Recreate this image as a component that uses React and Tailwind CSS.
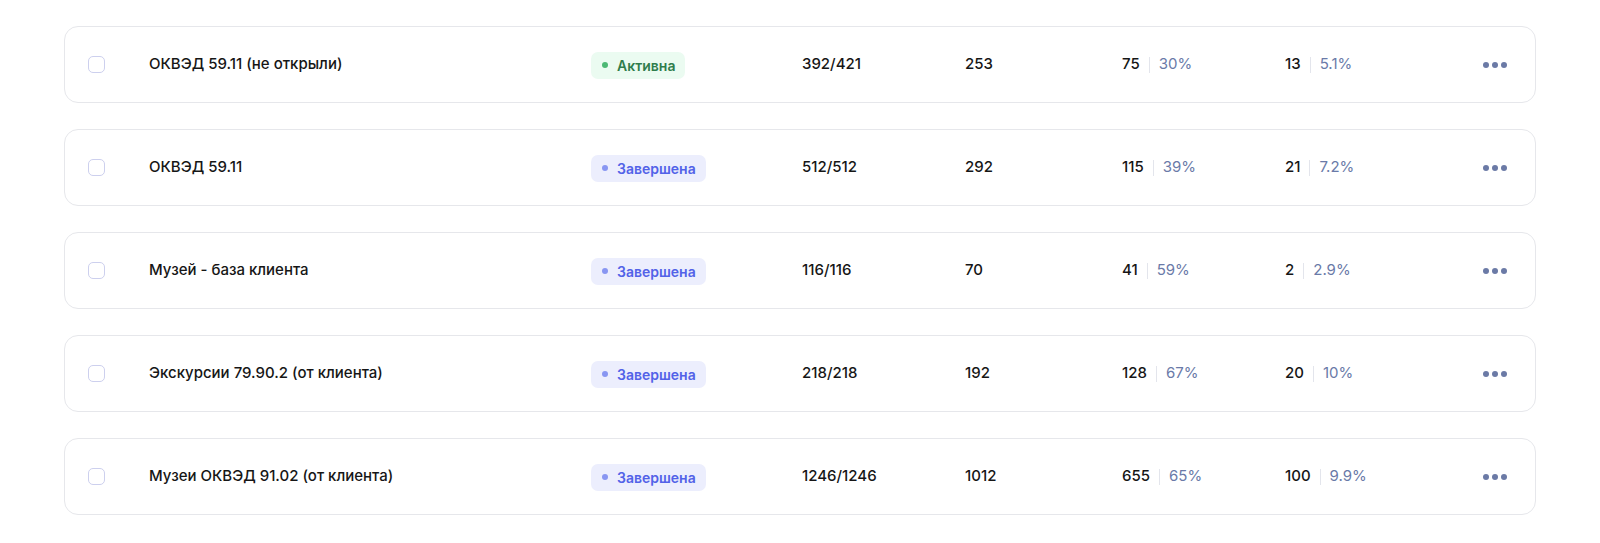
import React from "react";

const rows = [
  { name: "ОКВЭД 59.11 (не открыли)", status: "active", sent: "392/421", opened: "253", a: "75", ap: "30%", b: "13", bp: "5.1%" },
  { name: "ОКВЭД 59.11", status: "done", sent: "512/512", opened: "292", a: "115", ap: "39%", b: "21", bp: "7.2%" },
  { name: "Музей - база клиента", status: "done", sent: "116/116", opened: "70", a: "41", ap: "59%", b: "2", bp: "2.9%" },
  { name: "Экскурсии 79.90.2 (от клиента)", status: "done", sent: "218/218", opened: "192", a: "128", ap: "67%", b: "20", bp: "10%" },
  { name: "Музеи ОКВЭД 91.02 (от клиента)", status: "done", sent: "1246/1246", opened: "1012", a: "655", ap: "65%", b: "100", bp: "9.9%" },
];

function Badge({ status }) {
  if (status === "active") {
    return (
      <span className="inline-flex h-[27px] items-center gap-[9px] rounded-[7px] bg-[#ebfbf1] pl-[11px] pr-[10px] text-[14px] font-semibold text-[#2f7d4c]">
        <span className="h-[6px] w-[6px] rounded-full bg-[#4cb874]" />
        Активна
      </span>
    );
  }
  return (
    <span className="inline-flex h-[27px] items-center gap-[9px] rounded-[7px] bg-[#eceefd] pl-[11px] pr-[10px] text-[14px] font-semibold text-[#5262e8]">
      <span className="h-[6px] w-[6px] rounded-full bg-[#8896f2]" />
      Завершена
    </span>
  );
}

function Pair({ n, p }) {
  return (
    <div className="flex items-center">
      <span className="text-[15px] font-medium text-[#161616]">{n}</span>
      <span className="mx-[9px] h-[16px] w-px bg-[#e3e5ec]" />
      <span className="text-[15px] font-normal text-[#6a7aa8]">{p}</span>
    </div>
  );
}

export default function App() {
  return (
    <div
      className="flex min-h-[543px] w-full flex-col gap-[26px] bg-white px-[64px] pt-[26px]"
      style={{ fontFamily: "Inter, 'Noto Sans', sans-serif" }}
    >
      {rows.map((r, i) => (
        <div
          key={i}
          className="flex h-[77px] items-center rounded-[14px] border border-[#e6e7eb] bg-white pl-[23px] pr-[28px]"
        >
          <div className="w-[61px] shrink-0">
            <div className="h-[17px] w-[17px] rounded-[5px] border-[1.5px] border-[#cdd0ee]" />
          </div>
          <div className="w-[442px] shrink-0 text-[15px] font-medium text-[#161616]">{r.name}</div>
          <div className="w-[211px] shrink-0">
            <Badge status={r.status} />
          </div>
          <div className="w-[163px] shrink-0 text-[15px] font-medium text-[#161616]">{r.sent}</div>
          <div className="w-[157px] shrink-0 text-[15px] font-medium text-[#161616]">{r.opened}</div>
          <div className="w-[163px] shrink-0">
            <Pair n={r.a} p={r.ap} />
          </div>
          <div className="flex-1">
            <Pair n={r.b} p={r.bp} />
          </div>
          <div className="flex items-center gap-[3px]">
            <span className="h-[6px] w-[6px] rounded-full bg-[#6b7aa6]" />
            <span className="h-[6px] w-[6px] rounded-full bg-[#6b7aa6]" />
            <span className="h-[6px] w-[6px] rounded-full bg-[#6b7aa6]" />
          </div>
        </div>
      ))}
    </div>
  );
}
